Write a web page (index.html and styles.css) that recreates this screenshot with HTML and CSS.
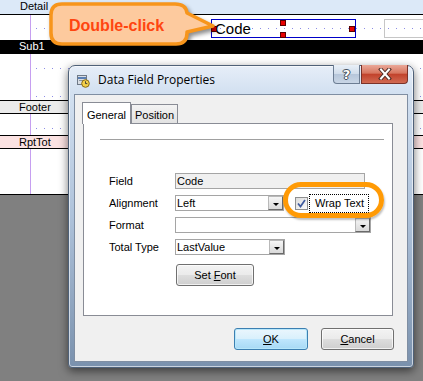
FILE: index.html
```html
<!DOCTYPE html>
<html lang="en">
<head>
    <meta charset="UTF-8">
    <title>Data Field Properties</title>
    <link rel="stylesheet" href="styles.css">
</head>
<body>
    <!-- report designer in the background -->
    <div class="designer">
        <div class="band band-detail">Detail</div>
        <div class="area">
            <div class="grid grid-detail">
                <div class="field field-code">Code
                    <i class="handle h-left"></i>
                    <i class="handle h-top"></i>
                    <i class="handle h-bottom"></i>
                    <i class="handle h-right"></i>
                </div>
                <div class="field field-next"></div>
            </div>
        </div>
        <div class="band band-sub">Sub1</div>
        <div class="area">
            <div class="grid grid-sub"></div>
        </div>
        <div class="band band-footer">Footer</div>
        <div class="area">
            <div class="grid grid-footer"></div>
        </div>
        <div class="band band-total">RptTot</div>
        <div class="area">
            <div class="grid grid-total"></div>
        </div>
    </div>

    <!-- callout -->
    <div class="callout">
        <svg class="callout-shape" width="172" height="52" viewBox="0 0 172 52">
            <path d="M16 4 H129 Q140 4 141 13 L167 26 L141 32 V33 Q141 44 130 44 H16 Q5 44 5 33 V15 Q5 4 16 4 Z" fill="#fdca9e" stroke="#f7951c" stroke-width="3.5" stroke-linejoin="round"/>
        </svg>
        <div class="callout-text">Double-click</div>
    </div>

    <!-- dialog -->
    <div class="dialog">
        <div class="titlebar">
            <svg class="app-icon" width="14" height="14" viewBox="0 0 14 14">
                <rect x="1.5" y="1.5" width="9" height="9" fill="#d8dde4" stroke="#6f7a88"/>
                <rect x="2" y="3" width="8" height="2" fill="#5a7fb4"/>
                <rect x="3" y="6" width="5" height="1" fill="#8b95a3"/>
                <circle cx="9.5" cy="9.5" r="3.8" fill="#f3d04a" stroke="#8a6a10"/>
                <path d="M9.5 7.3 V9.6 H11.3" fill="none" stroke="#333" stroke-width="0.9"/>
            </svg>
            <span class="title">Data Field Properties</span>
            <div class="caption-btns">
                <span class="cap-btn cap-help">?</span>
                <span class="cap-btn cap-close">
                    <svg width="14" height="12" viewBox="0 0 14 12">
                        <path d="M3 1.5 L11 10.5 M11 1.5 L3 10.5" stroke="#4a2a24" stroke-width="4" stroke-linecap="square"/>
                        <path d="M3 1.5 L11 10.5 M11 1.5 L3 10.5" stroke="#fff" stroke-width="2" stroke-linecap="square"/>
                    </svg>
                </span>
            </div>
        </div>
        <div class="client">
            <div class="tabs">
                <span class="tab tab-active">General</span>
                <span class="tab">Position</span>
            </div>
            <div class="panel">
                <div class="rule"></div>
                <div class="row">
                    <span class="label">Field</span>
                    <div class="input input-disabled w-field">Code</div>
                </div>
                <div class="row">
                    <span class="label">Alignment</span>
                    <div class="input combo w-align">Left<i class="drop"></i></div>
                    <span class="check">
                        <svg width="11" height="11" viewBox="0 0 11 11">
                            <path d="M2 5.5 L4.5 8.5 L9 2" fill="none" stroke="#3e5a9e" stroke-width="1.7"/>
                        </svg>
                    </span>
                    <span class="check-label">Wrap Text</span>
                </div>
                <div class="row">
                    <span class="label">Format</span>
                    <div class="input combo w-format"><i class="drop"></i></div>
                </div>
                <div class="row">
                    <span class="label">Total Type</span>
                    <div class="input combo w-total">LastValue<i class="drop"></i></div>
                </div>
                <button class="btn btn-font">Set <u>F</u>ont</button>
            </div>
            <div class="actions">
                <button class="btn btn-default btn-ok"><u>O</u>K</button>
                <button class="btn btn-cancel"><u>C</u>ancel</button>
            </div>
        </div>
    </div>

    <!-- highlight ring -->
    <div class="ring"></div>
</body>
</html>
```

FILE: styles.css
```css
*{
    margin: 0;
    padding: 0;
    box-sizing: border-box;
}
body{
    width: 423px;
    height: 381px;
    overflow: hidden;
    position: relative;
    background-color: #808080;
    font-family: "Liberation Sans", Arial, sans-serif;
    font-size: 11px;
    color: #000;
}

/* designer */
.designer{
    background-color: #fff;
    border-bottom: 1px solid #000;
}
.band{
    height: 14px;
    line-height: 13px;
    padding-left: 19px;
}
.band-detail{
    height: 15px;
    padding-left: 20px;
    background-color: #dce9f8;
    border-bottom: 1px solid #000;
}
.band-sub{
    background-color: #000;
    color: #fff;
}
.band-footer,
.band-total{
    line-height: 12px;
    border-top: 1px solid #000;
    border-bottom: 1px solid #000;
    background-color: #ebebeb;
}
.band-total{
    background-color: #fbe2e2;
}
.area{
    /* purple margin line */
    background: linear-gradient(90deg, transparent 30px, #c69ff0 30px, #c69ff0 31px, transparent 31px);
}
.grid{
    margin-left: 36px;
    background-image: linear-gradient(90deg, #8c8ce6 1px, transparent 1px), linear-gradient(90deg, #8c8ce6 1px, transparent 1px);
    background-size: 8px 1px;
    background-repeat: repeat-x;
}
.grid-detail{
    height: 25px;
    display: flex;
    padding-top: 4px;
    background-position: 0 13px, 0 13px;
}
.grid-sub{
    height: 46px;
    background-position: 0 14px, 0 42px;
}
.grid-footer{
    height: 21px;
    background-position: 0 14px, 0 14px;
}
.grid-total{
    height: 45px;
    background-image: none;
}
.field{
    height: 19px;
    border: 1px solid #c6c6c6;
}
.field-code{
    position: relative;
    width: 145px;
    margin-left: 175px;
    border-color: #0000c8;
    padding-left: 3px;
    font-size: 15px;
    line-height: 17px;
}
.field-next{
    flex: 1;
    margin-left: 28px;
    border-right: none;
}
.handle{
    position: absolute;
    width: 6px;
    height: 6px;
    background-color: #e80000;
    border: 1px solid #5a0000;
}
.h-left{ left: -1px; top: 6px; }
.h-top{ left: 68px; top: 0; }
.h-bottom{ left: 68px; top: 12px; }
.h-right{ left: 137px; top: 6px; }

/* callout */
.callout{
    position: absolute;
    left: 46px;
    top: 0;
    width: 172px;
    height: 52px;
}
.callout-shape{
    position: absolute;
    left: 0;
    top: 0;
    filter: drop-shadow(2px 3px 2px rgba(0,0,0,0.45));
}
.callout-text{
    position: relative;
    padding: 16px 0 0 23px;
    font-size: 16px;
    line-height: 20px;
    font-weight: bold;
    color: #ff4510;
}

/* dialog window */
.dialog{
    position: absolute;
    left: 68px;
    top: 65px;
    width: 346px;
    height: 303px;
    padding: 0 5px 5px;
    border: 1px solid #4f6178;
    border-radius: 7px 7px 4px 4px;
    background: linear-gradient(180deg, #e6eef8 0, #d3e1f1 26px, #aec2da 50%, #7a91ad 100%);
    box-shadow: inset 0 0 0 1px rgba(255,255,255,0.6), 0 3px 10px rgba(0,0,0,0.55);
}
.titlebar{
    height: 28px;
    display: flex;
    align-items: center;
}
.app-icon{
    margin-left: 2px;
    margin-top: 1px;
}
.title{
    margin-left: 8px;
    font-family: "Open Sans", "Noto Sans", sans-serif;
    font-size: 12px;
    line-height: 16px;
    color: #000;
}
.caption-btns{
    display: flex;
    gap: 1px;
    margin-left: auto;
    align-self: flex-start;
    margin-top: -1px;
}
.cap-btn{
    height: 19px;
    display: flex;
    align-items: center;
    justify-content: center;
}
.cap-help{
    width: 27px;
    border: 1px solid #6c7d93;
    border-top: none;
    border-radius: 0 0 0 4px;
    background: linear-gradient(180deg, #e9f0f8 0, #d0dcea 50%, #b6c6da 51%, #c9d6e6 100%);
    font-family: "DejaVu Sans", sans-serif;
    font-size: 13px;
    font-weight: bold;
    color: #fff;
    text-shadow: 0 0 1px #333, 1px 0 0 #4a5566, -1px 0 0 #4a5566, 0 1px 0 #4a5566, 0 -1px 0 #4a5566;
}
.cap-close{
    width: 47px;
    border: 1px solid #7b3228;
    border-top: none;
    border-radius: 0 0 4px 0;
    background: linear-gradient(180deg, #eaa898 0, #d7765f 45%, #c2432c 52%, #d16a52 100%);
}

/* client area */
.client{
    height: 268px;
    padding: 7px 0 0 8px;
    background-color: #f0f0f0;
    border: 1px solid #7f8ea2;
}
.tabs{
    display: flex;
    align-items: flex-end;
    height: 22px;
    margin-bottom: -1px;
    margin-left: -1px;
    position: relative;
    z-index: 1;
}
.tab{
    width: 47px;
    height: 20px;
    padding-top: 4px;
    line-height: 13px;
    text-align: center;
    border: 1px solid #898c95;
    background: linear-gradient(180deg, #f3f3f3, #e2e2e2);
}
.tab-active{
    width: 49px;
    height: 22px;
    padding-top: 6px;
    border-bottom: none;
    background: #fff;
}
.panel{
    width: 310px;
    height: 193px;
    background-color: #fff;
    border: 1px solid #898c95;
}
.rule{
    height: 1px;
    width: 284px;
    margin: 15px 0 33px 16px;
    background-color: #a0a0a0;
}
.row{
    display: flex;
    align-items: center;
    height: 16px;
    margin-bottom: 6px;
    padding-left: 25px;
}
.label{
    width: 66px;
    line-height: 16px;
}
.input{
    height: 16px;
    line-height: 14px;
    padding-left: 1px;
    border: 1px solid #a5a5a5;
    background-color: #fff;
    display: flex;
}
.input-disabled{
    background-color: #f0f0f0;
}
.w-field{ width: 190px; }
.w-align{ width: 109px; }
.w-format{ width: 196px; }
.w-total{ width: 110px; }
.drop{
    margin-left: auto;
    width: 15px;
    height: 14px;
    border: 1px solid #6a6a6a;
    border-top-color: #b9b9b9;
    border-left-color: #b9b9b9;
    background: linear-gradient(180deg, #f6f6f6, #d9d9d9);
    position: relative;
}
.drop::after{
    content: "";
    position: absolute;
    left: 4px;
    top: 6px;
    border-left: 3px solid transparent;
    border-right: 3px solid transparent;
    border-top: 3px solid #000;
}
.check{
    width: 13px;
    height: 13px;
    margin-left: 11px;
    border: 1px solid #8e8f8f;
    background: linear-gradient(135deg, #dcdcdc, #fbfbfb);
    display: flex;
    align-items: center;
    justify-content: center;
}
.check-label{
    height: 19px;
    margin-left: 1px;
    padding: 0 4px 0 5px;
    line-height: 17px;
    border: 1px dotted #000;
}
.btn{
    height: 22px;
    font-family: "Liberation Sans", Arial, sans-serif;
    font-size: 11px;
    color: #000;
    border: 1px solid #707070;
    border-radius: 3px;
    background: linear-gradient(180deg, #f3f3f3 0, #ebebeb 48%, #dddddd 52%, #cfcfcf 100%);
    box-shadow: inset 0 0 0 1px rgba(255,255,255,0.7);
}
.btn u{
    text-decoration: underline;
}
.btn-font{
    width: 78px;
    margin: 3px 0 0 92px;
}
.actions{
    display: flex;
    justify-content: flex-end;
    gap: 13px;
    margin-top: 12px;
    padding-right: 13px;
}
.btn-ok{
    width: 74px;
}
.btn-cancel{
    width: 73px;
}
.btn-default{
    border-color: #3c7fb1;
    background: linear-gradient(180deg, #eaf6fd 0, #d9f0fc 48%, #bee6fd 52%, #a7d9f5 100%);
    box-shadow: inset 0 0 0 1px #b7e7fb;
}

/* orange ring */
.ring{
    position: absolute;
    left: 283px;
    top: 182px;
    width: 101px;
    height: 36px;
    border: 5px solid #ff9a05;
    border-radius: 18px;
    box-shadow: 1px 2px 2px rgba(0,0,0,0.25);
}
```
